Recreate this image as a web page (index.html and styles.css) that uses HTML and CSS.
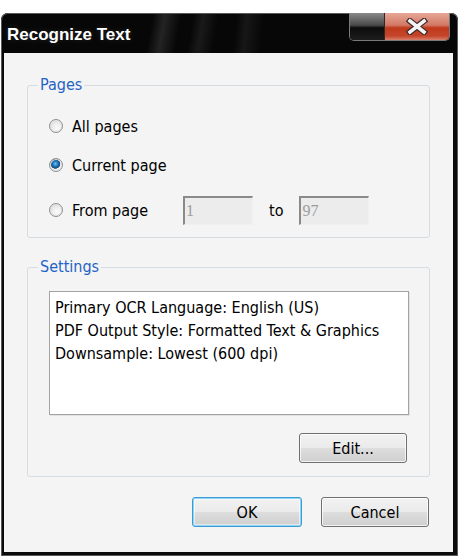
FILE: index.html
```html
<!DOCTYPE html>
<html lang="en">
<head>
    <meta charset="UTF-8">
    <title>Recognize Text</title>
    <link rel="stylesheet" href="styles.css">
</head>
<body>
    <div class="window">
        <div class="titlebar">
            <span class="title">Recognize Text</span>
            <div class="caption-buttons">
                <span class="cap-btn cap-min"></span>
                <span class="cap-btn cap-close">
                    <svg width="22" height="17" viewBox="0 0 22 17">
                        <path d="M4 3 L18 14 M18 3 L4 14" stroke="#3a2a28" stroke-width="6" stroke-linecap="square" fill="none"/>
                        <path d="M4 3 L18 14 M18 3 L4 14" stroke="#f4f4f4" stroke-width="3.6" stroke-linecap="square" fill="none"/>
                    </svg>
                </span>
            </div>
        </div>

        <div class="client">
            <fieldset class="group pages">
                <legend>Pages</legend>
                <div class="group-body">
                    <label class="row"><input type="radio" name="pages"> All pages</label>
                    <label class="row"><input type="radio" name="pages" checked> Current page</label>
                    <div class="row range">
                        <label class="range-label"><input type="radio" name="pages"> From page</label>
                        <input type="text" class="page-box" value="1" disabled>
                        <span class="to">to</span>
                        <input type="text" class="page-box" value="97" disabled>
                    </div>
                </div>
            </fieldset>

            <fieldset class="group settings">
                <legend>Settings</legend>
                <div class="group-body">
                    <div class="listbox">
                        <div>Primary OCR Language: English (US)</div>
                        <div>PDF Output Style: Formatted Text &amp; Graphics</div>
                        <div>Downsample: Lowest (600 dpi)</div>
                    </div>
                    <div class="edit-row">
                        <button class="btn">Edit...</button>
                    </div>
                </div>
            </fieldset>

            <div class="dialog-buttons">
                <button class="btn btn-default">OK</button>
                <button class="btn">Cancel</button>
            </div>
        </div>
    </div>
</body>
</html>
```

FILE: styles.css
```css
body {
    margin: 0;
    background: #fff;
    font-family: "DejaVu Sans Condensed", "DejaVu Sans", sans-serif;
    font-size: 16px;
    color: #000;
}
.window {
    margin: 13px 0 0 1px;
    width: 457px;
    height: 543px;
    display: flex;
    flex-direction: column;
    background: #0b0b0b;
    border-radius: 7px 7px 0 0;
    box-shadow: inset 0 0 0 1px #5a5a5a;
}
.titlebar {
    height: 40px;
    flex: none;
    display: flex;
    justify-content: space-between;
    align-items: flex-start;
    padding-left: 6px;
    border-radius: 7px 7px 0 0;
    background:
        linear-gradient(100deg, transparent 150px, rgba(70, 70, 70, 0.45) 162px, transparent 178px, transparent 190px, rgba(60, 60, 60, 0.35) 200px, transparent 215px),
        linear-gradient(96deg, transparent 235px, rgba(60, 60, 60, 0.3) 245px, transparent 262px),
        #070707;
    box-shadow: inset 0 1px 0 #5a5a5a, inset 1px 0 0 #5a5a5a, inset -1px 0 0 #5a5a5a;
}
.title {
    padding-top: 12px;
    font-family: "Liberation Sans", Arial, sans-serif;
    font-weight: bold;
    font-size: 17px;
    line-height: 20px;
    color: #fff;
    text-shadow: 0 0 6px rgba(255, 255, 255, 0.15);
}
.caption-buttons {
    display: flex;
    margin-right: 8px;
    height: 27px;
    border: 1px solid #7a7a7a;
    border-top: none;
    border-radius: 0 0 5px 5px;
    overflow: hidden;
}
.cap-btn {
    display: flex;
    align-items: center;
    justify-content: center;
}
.cap-min {
    width: 34px;
    background: linear-gradient(#8a8a8a, #4a4a4a 45%, #0c0c0c 55%, #1e1e1e);
    border-right: 1px solid #2a2a2a;
}
.cap-close {
    width: 64px;
    background: linear-gradient(#e7a898, #d37865 45%, #c03a1c 55%, #c5452a 85%, #d8806c);
}
.client {
    flex: 1;
    margin: 0 5px 4px 3px;
    padding: 0 23px;
    background: #f4f4f4;
    display: flex;
    flex-direction: column;
}
.group {
    margin: 0;
    padding: 0;
    border: 1px solid #d5dce2;
    border-radius: 3px;
}
.group legend {
    margin-left: 10px;
    padding: 0 2px;
    line-height: 16px;
    color: #1f63c6;
}
.pages {
    margin-top: 24px;
}
.pages .group-body {
    padding: 21px 0 12px 21px;
}
.row {
    display: flex;
    align-items: center;
    gap: 9px;
    height: 24px;
}
.row + .row {
    margin-top: 15px;
}
.row.range {
    height: 30px;
    margin-top: 18px;
    gap: 0;
}
.range-label {
    display: flex;
    align-items: center;
    gap: 9px;
    width: 134px;
}
input[type="radio"] {
    appearance: none;
    width: 14px;
    height: 14px;
    margin: 0;
    border: 1px solid #8e8f8f;
    border-radius: 50%;
    background: radial-gradient(circle at 60% 65%, #fbfbfb 0, #f0f0f0 35%, #cfcfcf 100%);
    box-shadow: inset 0 0 0 1px #e8e8e8;
}
input[type="radio"]:checked {
    background:
        radial-gradient(circle at 45% 40%, #7cc7f0 0, #2a86c8 2px, #0f5592 4px, #2d4f6e 4.6px, transparent 5.2px),
        radial-gradient(circle at 60% 65%, #fbfbfb 0, #f0f0f0 35%, #cfcfcf 100%);
}
.page-box {
    box-sizing: border-box;
    width: 70px;
    height: 29px;
    margin: 0;
    padding: 0 0 0 1px;
    border-style: solid;
    border-width: 2px 1px 1px 2px;
    border-color: #8a8a8a #f0f0f0 #f0f0f0 #8a8a8a;
    background: #ececec;
    font-family: "Liberation Serif", "Times New Roman", serif;
    font-size: 16px;
    color: #9c9c9c;
}
.to {
    margin: 0 16px;
}
.settings {
    margin-top: 21px;
}
.settings .group-body {
    padding: 16px 20px 13px 21px;
}
.listbox {
    height: 124px;
    box-sizing: border-box;
    padding: 4px 5px;
    border: 1px solid #a3a3a3;
    background: #fff;
    line-height: 23px;
    box-shadow: 1px 1px 0 #e2e2e2;
}
.edit-row {
    display: flex;
    justify-content: flex-end;
    margin-top: 18px;
    padding-right: 2px;
}
.btn {
    width: 108px;
    height: 30px;
    padding: 0;
    border: 1px solid #707070;
    border-radius: 3px;
    background: linear-gradient(#f2f2f2, #ebebeb 48%, #dddddd 52%, #cfcfcf);
    box-shadow: inset 0 0 0 1px rgba(255, 255, 255, 0.75);
    font-family: inherit;
    font-size: 16px;
    color: #000;
}
.btn-default {
    width: 110px;
    border-color: #3c9ad6;
    box-shadow: inset 0 0 0 1px #8fd6f6, inset 0 0 0 2px rgba(255, 255, 255, 0.5);
}
.dialog-buttons {
    display: flex;
    justify-content: flex-end;
    gap: 19px;
    margin-top: 20px;
    padding-right: 1px;
}
```
